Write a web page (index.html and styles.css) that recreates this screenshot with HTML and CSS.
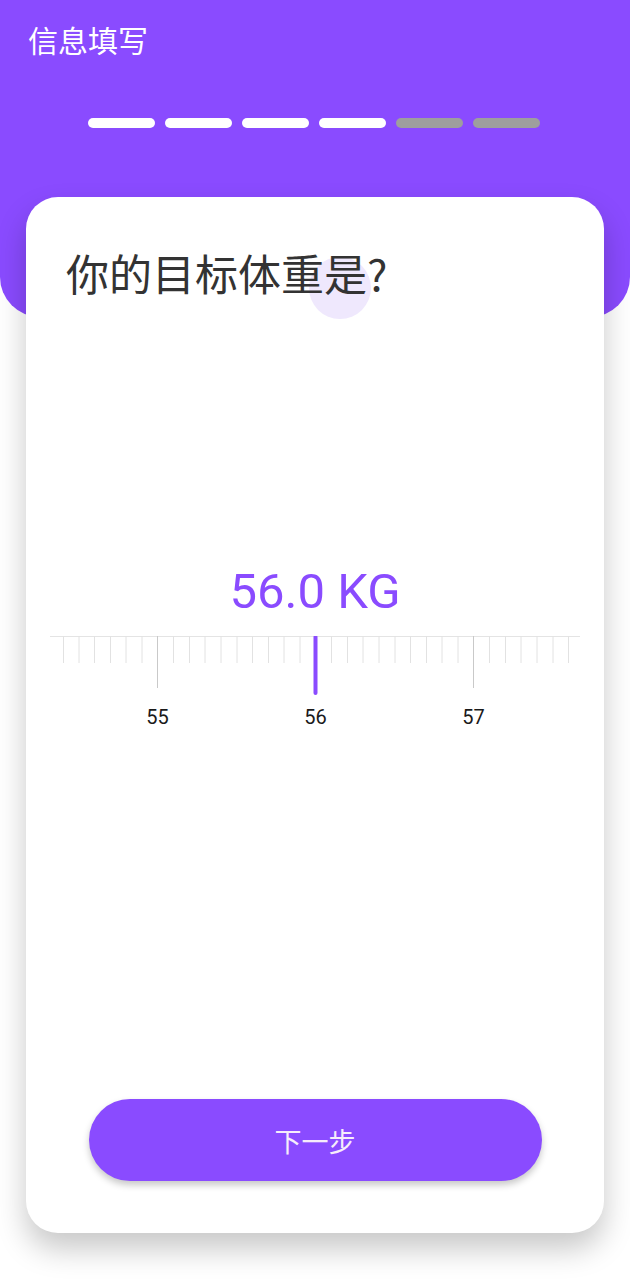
FILE: index.html
```html
<!DOCTYPE html>
<html lang="zh-CN">
<head>
    <meta charset="UTF-8">
    <meta name="viewport" content="width=device-width, initial-scale=1.0">
    <title>信息填写</title>
    <link rel="stylesheet" href="styles.css">
</head>
<body>

    <div class="header">
        <h1 class="header-title">信息填写</h1>
        <div class="progress">
            <span class="step done"></span>
            <span class="step done"></span>
            <span class="step done"></span>
            <span class="step done"></span>
            <span class="step"></span>
            <span class="step"></span>
        </div>
    </div>

    <div class="card">
        <span class="ripple"></span>
        <h2 class="question">你的目标体重是?</h2>

        <div class="picker">
            <div class="value">56.0 KG</div>
            <svg class="ruler" width="530" height="100" viewBox="0 0 530 100">
                <line x1="0" y1="0.5" x2="530" y2="0.5" stroke="#e4e4e4" stroke-width="1"/>
                <path stroke="#e2e2e2" stroke-width="1" fill="none"
                      d="M13.5 0v27M29 0v27M44.5 0v27M60.5 0v27M76 0v27M92 0v27
                         M123.5 0v27M139.5 0v27M155 0v27M171 0v27M187 0v27M202.5 0v27M218.5 0v27M234 0v27M250 0v27
                         M281.5 0v27M297.5 0v27M313 0v27M329 0v27M345 0v27M360.5 0v27M376.5 0v27M392 0v27M408 0v27
                         M439.5 0v27M455.5 0v27M471 0v27M487 0v27M503 0v27M518.5 0v27"/>
                <path stroke="#c9c9c9" stroke-width="1" fill="none" d="M107.5 0v52M423.5 0v52"/>
                <line x1="265.5" y1="1" x2="265.5" y2="57" stroke="#8a4bff" stroke-width="4" stroke-linecap="round"/>
                <text x="107.5" y="88" class="ruler-label">55</text>
                <text x="265.5" y="88" class="ruler-label">56</text>
                <text x="423.5" y="88" class="ruler-label">57</text>
            </svg>
        </div>

        <button class="next-button">下一步</button>
    </div>

</body>
</html>
```

FILE: styles.css
```css
body {
    margin: 0;
    padding-bottom: 47px;
    background-color: #ffffff;
    font-family: 'Noto Sans CJK SC', 'Noto Sans', sans-serif;
}
.header {
    height: 317px;
    background-color: #8a4bff;
    border-radius: 0 0 40px 40px;
    padding: 21px 0 0 28px;
    box-sizing: border-box;
}
.header-title {
    margin: 0;
    font-size: 30px;
    line-height: 36px;
    font-weight: 400;
    color: #ffffff;
}
.progress {
    display: flex;
    gap: 10px;
    margin-top: 61px;
    padding-left: 60px;
}
.step {
    width: 67px;
    height: 10px;
    border-radius: 5px;
    background-color: #9e9e9e;
}
.step.done {
    background-color: #ffffff;
}
.card {
    position: relative;
    display: flex;
    flex-direction: column;
    align-items: center;
    width: 578px;
    height: 1036px;
    margin: -120px 0 0 26px;
    padding: 49px 0 52px;
    box-sizing: border-box;
    background-color: #ffffff;
    border-radius: 32px;
    box-shadow: 0 16px 30px rgba(0, 0, 0, 0.22);
}
.ripple {
    position: absolute;
    left: 283px;
    top: 60px;
    width: 62px;
    height: 62px;
    border-radius: 50%;
    background-color: #efe8fd;
}
.question {
    position: relative;
    align-self: flex-start;
    margin: 0 0 0 40px;
    font-size: 43px;
    line-height: 52px;
    font-weight: 400;
    color: #333333;
}
.picker {
    display: flex;
    flex-direction: column;
    align-items: center;
    margin-top: 266px;
}
.value {
    font-family: Roboto, sans-serif;
    font-size: 49px;
    line-height: 56px;
    color: #8a4bff;
}
.ruler {
    display: block;
    margin-top: 16px;
}
.ruler-label {
    font-family: Roboto, sans-serif;
    font-size: 20px;
    fill: #1a1a1a;
    text-anchor: middle;
}
.next-button {
    margin-top: auto;
    width: 453px;
    height: 82px;
    border: none;
    border-radius: 41px;
    background-color: #8a4bff;
    color: #f6ecfb;
    font-family: 'Noto Sans CJK SC', sans-serif;
    font-size: 27px;
    box-shadow: 0 4px 7px rgba(0, 0, 0, 0.22);
    cursor: pointer;
}
```
